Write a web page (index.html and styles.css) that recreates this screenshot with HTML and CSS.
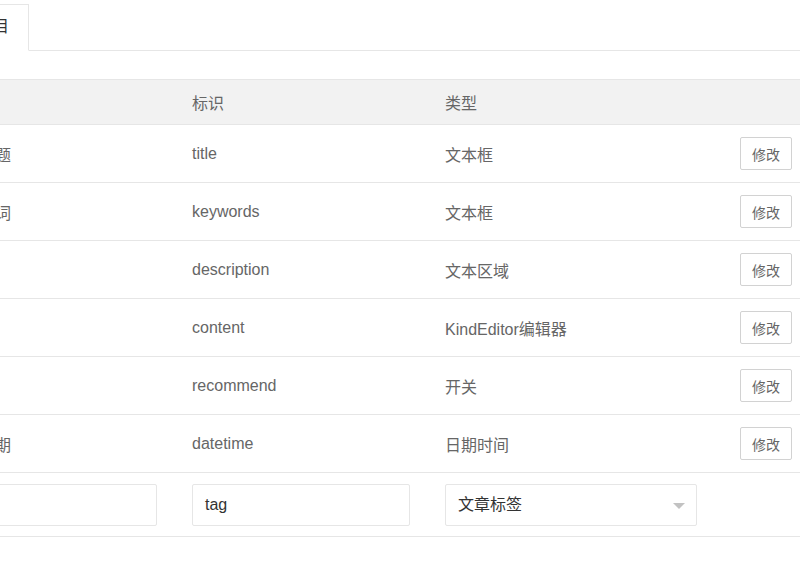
FILE: index.html
```html
<!DOCTYPE html>
<html lang="zh">
<head>
<meta charset="utf-8">
<link rel="stylesheet" href="styles.css">
</head>
<body>
<div class="page">
  <ul class="tabbar">
    <li class="tab active">栏目</li>
  </ul>
  <table class="grid">
    <colgroup>
      <col class="c1"><col class="c2"><col class="c3"><col class="c4">
    </colgroup>
    <thead>
      <tr><th>名称</th><th>标识</th><th>类型</th><th></th></tr>
    </thead>
    <tbody>
      <tr><td>主标题</td><td>title</td><td>文本框</td><td><button class="btn">修改</button></td></tr>
      <tr><td>关键词</td><td>keywords</td><td>文本框</td><td><button class="btn">修改</button></td></tr>
      <tr><td>描述</td><td>description</td><td>文本区域</td><td><button class="btn">修改</button></td></tr>
      <tr><td>内容</td><td>content</td><td>KindEditor编辑器</td><td><button class="btn">修改</button></td></tr>
      <tr><td>推荐</td><td>recommend</td><td>开关</td><td><button class="btn">修改</button></td></tr>
      <tr><td>有效期</td><td>datetime</td><td>日期时间</td><td><button class="btn">修改</button></td></tr>
      <tr class="form-row">
        <td><div class="input"></div></td>
        <td><div class="input">tag</div></td>
        <td><div class="select">文章标签<span class="arrow"></span></div></td>
        <td></td>
      </tr>
    </tbody>
  </table>
</div>
</body>
</html>
```
FILE: styles.css
```css
html, body {
  margin: 0;
  padding: 0;
  background: #fff;
  overflow: hidden;
}
body {
  width: 800px;
  height: 572px;
  font-family: "Liberation Sans", Arial, "Noto Sans CJK SC", sans-serif;
  font-size: 16px;
  color: #666;
}
.page {
  margin-left: -52px;
  width: 900px;
}
.tabbar {
  list-style: none;
  margin: 4px 0 0 0;
  padding: 0 0 0 9px;
  height: 47px;
  box-sizing: border-box;
  border-bottom: 1px solid #e6e6e6;
  display: flex;
}
.tab {
  width: 72px;
  height: 47px;
  box-sizing: border-box;
  border: 1px solid #e6e6e6;
  border-bottom-color: #fff;
  background: #fff;
  text-align: center;
  line-height: 44px;
  color: #333;
}
.grid {
  margin-top: 28px;
  border-collapse: collapse;
  table-layout: fixed;
  width: 852px;
}
.c1 { width: 229px; }
.c2 { width: 253px; }
.c3 { width: 295px; }
.c4 { width: 75px; }
.grid th {
  background: #f2f2f2;
  font-weight: normal;
  text-align: left;
  height: 44px;
  padding: 0 15px;
  border-top: 1px solid #e6e6e6;
  border-bottom: 1px solid #e6e6e6;
  color: #666;
}
.grid td {
  height: 57px;
  padding: 0 15px;
  border-bottom: 1px solid #e6e6e6;
  vertical-align: middle;
  white-space: nowrap;
}
.btn {
  width: 52px;
  height: 33px;
  padding: 0;
  border: 1px solid #d2d2d2;
  border-radius: 2px;
  background: #fff;
  color: #666;
  font-family: "Liberation Sans", Arial, "Noto Sans CJK SC", sans-serif;
  font-size: 14px;
  display: block;
}
.form-row td {
  height: 63px;
}
.input {
  width: 218px;
  height: 42px;
  box-sizing: border-box;
  border: 1px solid #e6e6e6;
  border-radius: 2px;
  padding-left: 12px;
  line-height: 40px;
  color: #333;
}
.form-row td:first-child .input {
  width: 194px;
}
.select {
  position: relative;
  width: 252px;
  height: 42px;
  box-sizing: border-box;
  border: 1px solid #e6e6e6;
  border-radius: 2px;
  padding-left: 12px;
  line-height: 40px;
  color: #333;
}
.arrow {
  position: absolute;
  right: 11px;
  top: 18px;
  width: 0;
  height: 0;
  border-left: 6px solid transparent;
  border-right: 6px solid transparent;
  border-top: 6px solid #c2c2c2;
}
```
